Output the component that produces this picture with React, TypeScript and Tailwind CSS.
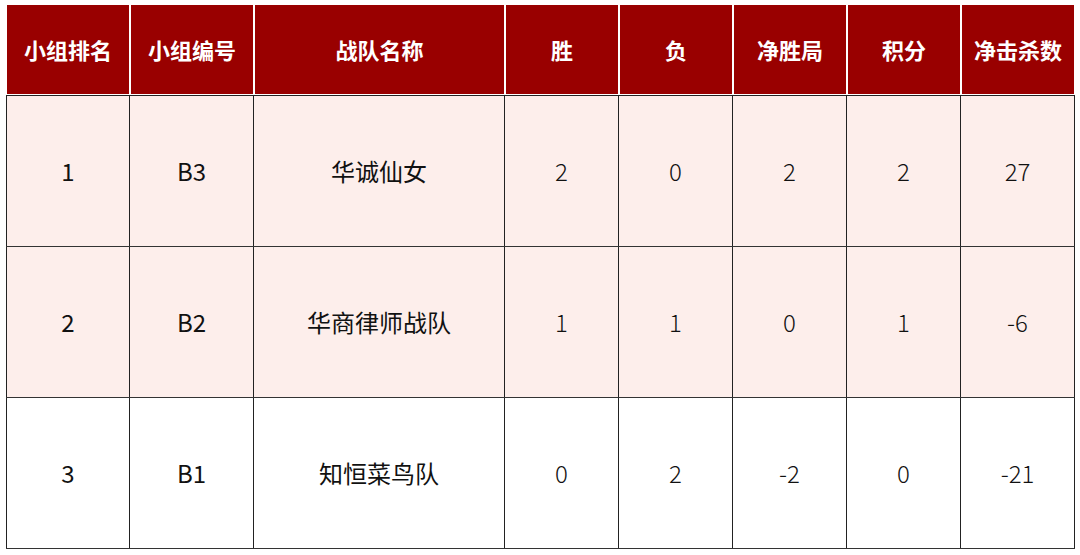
import React from 'react';

interface TeamRow {
  rank: string;
  group: string;
  name: string;
  win: string;
  lose: string;
  netWin: string;
  points: string;
  netKills: string;
  highlight: boolean;
}

const headers = ['小组排名', '小组编号', '战队名称', '胜', '负', '净胜局', '积分', '净击杀数'];

const rows: TeamRow[] = [
  { rank: '1', group: 'B3', name: '华诚仙女', win: '2', lose: '0', netWin: '2', points: '2', netKills: '27', highlight: true },
  { rank: '2', group: 'B2', name: '华商律师战队', win: '1', lose: '1', netWin: '0', points: '1', netKills: '-6', highlight: true },
  { rank: '3', group: 'B1', name: '知恒菜鸟队', win: '0', lose: '2', netWin: '-2', points: '0', netKills: '-21', highlight: false },
];

const gridCols = 'grid grid-cols-[124px_124px_251px_114px_114px_114px_114px_114px]';
const font = { fontFamily: '"Noto Sans CJK SC", "Noto Sans", sans-serif' };

const App: React.FC = () => {
  return (
    <div className="w-[1080px] h-[555px] bg-white pl-[6px] pt-[4px]" style={font}>
      <div className="w-[1069px]">
        {/* header */}
        <div className={`${gridCols} h-[91px]`}>
          {headers.map((h) => (
            <div
              key={h}
              className="flex items-center justify-center bg-[#990000] border-[1.5px] border-white text-white text-[22px] font-bold"
            >
              {h}
            </div>
          ))}
        </div>

        {/* body */}
        <div className="border-t border-[#222]">
          {rows.map((r) => {
            const cells = [r.rank, r.group, r.name, r.win, r.lose, r.netWin, r.points, r.netKills];
            return (
              <div
                key={r.rank}
                className={`${gridCols} h-[151px] border-b border-[#333] ${r.highlight ? 'bg-[#fdeeeb]' : 'bg-white'}`}
              >
                {cells.map((c, i) => (
                  <div
                    key={i}
                    className={`flex items-center justify-center border-r border-[#222] text-[#111] ${
                      i === 0 ? 'border-l' : ''
                    } ${i >= 3 ? 'text-[24px] font-light' : 'text-[24px]'}`}
                  >
                    {c}
                  </div>
                ))}
              </div>
            );
          })}
        </div>
      </div>
    </div>
  );
};

export default App;
